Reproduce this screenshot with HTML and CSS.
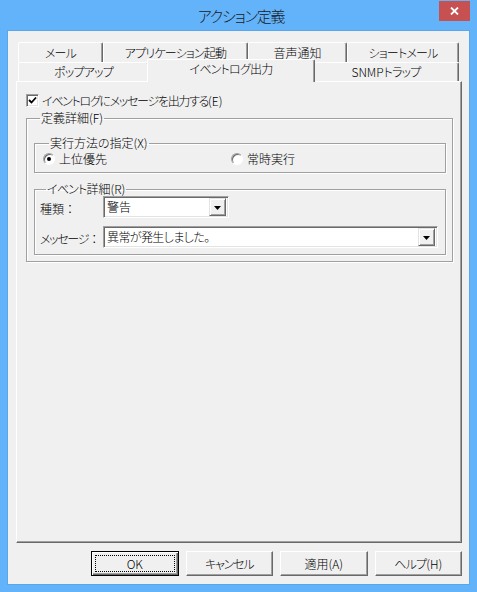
FILE: index.html
```html
<!DOCTYPE html>
<html lang="ja">
<head>
<meta charset="utf-8">
<title>アクション定義</title>
<link rel="stylesheet" href="styles.css">
</head>
<body>
<div class="window">
  <div class="titlebar">
    <div class="title">アクション定義</div>
    <div class="close"><svg width="9" height="8" viewBox="0 0 9 8"><path d="M1 0.5 L8 7.5 M8 0.5 L1 7.5" stroke="#fff" stroke-width="1.8" fill="none"/></svg></div>
  </div>
  <div class="client">
    <div class="tabrow back">
      <div class="tab w-mail">メール</div>
      <div class="tab w-app">アプリケーション起動</div>
      <div class="tab w-voice">音声通知</div>
      <div class="tab w-sms">ショートメール</div>
    </div>
    <div class="tabrow front">
      <div class="tab w-popup">ポップアップ</div>
      <div class="tab active w-event">イベントログ出力</div>
      <div class="tab w-snmp"><span class="lat">SNMP</span>トラップ</div>
    </div>
    <div class="panel">
      <div class="checkrow">
        <span class="checkbox"><svg width="9" height="9" viewBox="0 0 9 9"><path d="M1 4 L3.5 6.5 L8 1.5" stroke="#000" stroke-width="1.8" fill="none"/></svg></span>
        <span class="checklabel">イベントログにメッセージを出力する<span class="lat">(E)</span></span>
      </div>
      <fieldset class="group outer">
        <legend>定義詳細(F)</legend>
        <fieldset class="group inner mode">
          <legend>実行方法の指定(X)</legend>
          <div class="radios">
            <div class="radiorow"><span class="radio on"></span><span>上位優先</span></div>
            <div class="radiorow"><span class="radio"></span><span>常時実行</span></div>
          </div>
        </fieldset>
        <fieldset class="group inner detail">
          <legend><span class="kana">イベント</span>詳細(R)</legend>
          <div class="field">
            <span class="flabel">種類<span class="colon">：</span></span>
            <div class="combo short"><span class="ctext">警告</span><span class="dropbtn"><svg width="7" height="4" viewBox="0 0 7 4"><path d="M0 0 H7 L3.5 4 Z" fill="#000"/></svg></span></div>
          </div>
          <div class="field">
            <span class="flabel"><span class="kana2">メッセージ</span><span class="colon">：</span></span>
            <div class="combo long"><span class="ctext">異常が発生しました。</span><span class="dropbtn"><svg width="7" height="4" viewBox="0 0 7 4"><path d="M0 0 H7 L3.5 4 Z" fill="#000"/></svg></span></div>
          </div>
        </fieldset>
      </fieldset>
    </div>
    <div class="buttons">
      <div class="btn default"><span class="focus">OK</span></div>
      <div class="btn kana">キャンセル</div>
      <div class="btn">適用(A)</div>
      <div class="btn"><span class="kana">ヘルプ</span>(H)</div>
    </div>
  </div>
</div>
</body>
</html>
```
FILE: styles.css
```css
* { box-sizing: border-box; }
html, body { margin: 0; padding: 0; }
body {
  width: 477px;
  height: 592px;
  overflow: hidden;
  background: #63b3fb;
  font-family: "Noto Sans CJK JP", "Noto Sans", sans-serif;
  font-size: 12px;
  font-weight: 300;
  color: #000;
  font-feature-settings: "palt";
}
.window {
  height: 592px;
  display: flex;
  flex-direction: column;
  padding: 0 8px 8px 8px;
}
.titlebar {
  height: 31px;
  position: relative;
  flex: none;
}
.title {
  text-align: center;
  font-size: 15px;
  line-height: 20px;
  padding-top: 6px;
  padding-left: 5px;
  color: #1a1a1a;
  letter-spacing: -1.2px;
}
.close {
  position: absolute;
  right: -1px;
  top: 1px;
  width: 31px;
  height: 20px;
  background: #c75050;
  display: flex;
  align-items: center;
  justify-content: center;
}
.client {
  flex: 1;
  background: #f0f0f0;
  display: flex;
  flex-direction: column;
  padding: 11px 7px 0 8px;
  box-shadow: 0 0 0 1px #5aa6ec;
}
.tabrow {
  display: flex;
  margin-left: 2px;
  flex: none;
}
.tabrow.back { height: 20px; }
.tabrow.front { height: 19px; }
.tab {
  display: flex;
  align-items: center;
  justify-content: center;
  white-space: nowrap;
  line-height: 14px;
  letter-spacing: -0.8px;
  background: #f0f0f0;
  border-top: 1px solid #fff;
  border-left: 1px solid #fff;
  border-right: 1px solid #696969;
  box-shadow: inset -1px 0 0 #a0a0a0;
  border-top-left-radius: 2px;
  border-top-right-radius: 2px;
}
.w-mail { width: 85px; }
.w-app { width: 145px; }
.w-voice { width: 99px; letter-spacing: 0; }
.w-sms { width: 112px; }
.w-popup { width: 131px; }
.w-event { width: 168px; }
.w-snmp { width: 146px; }
.tab.active {
  height: 23px;
  margin: -3px -2px -1px -2px;
  position: relative;
  z-index: 1;
  padding-bottom: 4px;
}
.lat { letter-spacing: 0; }
.kana { letter-spacing: -0.8px; }
.kana2 { letter-spacing: -1.3px; }
.panel {
  width: 446px;
  height: 462px;
  flex: none;
  border-top: 1px solid #fff;
  border-left: 1px solid #fff;
  border-right: 1px solid #696969;
  border-bottom: 1px solid #696969;
  box-shadow: inset -1px -1px 0 #a0a0a0;
  padding: 11px 0 0 9px;
}
.checkrow {
  display: flex;
  align-items: center;
  height: 15px;
}
.checkbox {
  width: 13px;
  height: 13px;
  background: #fff;
  border: 1px solid;
  border-color: #a0a0a0 #fff #fff #a0a0a0;
  box-shadow: inset 1px 1px 0 #696969, inset -1px -1px 0 #e3e3e3;
  display: flex;
  align-items: center;
  justify-content: center;
  margin-right: 3px;
}
.checklabel { line-height: 14px; letter-spacing: -1.3px; }
.group {
  margin: 0;
  padding: 0;
  border: 1px solid #a0a0a0;
  box-shadow: inset 1px 1px 0 #fff, 1px 1px 0 #fff;
  min-width: 0;
}
.group legend {
  padding: 0 1px;
  margin-left: 6px;
  line-height: 14px;
}
.outer {
  width: 427px;
  margin-top: 3px;
  padding: 0 0 6px 7px;
}
.inner { width: 412px; }
.mode {
  margin-top: 11px;
  padding: 2px 0 6px 8px;
}
.radios {
  display: grid;
  grid-template-columns: 188px 1fr;
  height: 14px;
  align-items: center;
}
.radiorow {
  display: flex;
  align-items: center;
  gap: 4px;
  line-height: 14px;
}
.radio {
  width: 12px;
  height: 12px;
  border-radius: 50%;
  background: #fff;
  border: 1px solid;
  border-color: #a0a0a0 #fff #fff #a0a0a0;
  box-shadow: inset 1px 1px 0 #696969;
  display: flex;
  align-items: center;
  justify-content: center;
}
.radio.on::after {
  content: "";
  width: 4px;
  height: 4px;
  border-radius: 50%;
  background: #000;
}
.detail {
  margin-top: 9px;
  padding: 0 0 6px 5px;
}
.field {
  display: flex;
  align-items: center;
  height: 22px;
}
.field + .field { margin-top: 8px; }
.flabel {
  width: 63px;
  line-height: 14px;
  padding-top: 3px;
  white-space: nowrap;
}
.colon {
  font-feature-settings: normal;
}
.combo {
  height: 22px;
  background: #fff;
  border: 1px solid;
  border-color: #a0a0a0 #fff #fff #a0a0a0;
  box-shadow: inset 1px 1px 0 #696969, inset -1px -1px 0 #e3e3e3;
  display: flex;
  align-items: center;
  padding: 2px 2px 2px 3px;
}
.combo.short { width: 126px; }
.combo.long { width: 335px; }
.ctext {
  flex: 1;
  line-height: 14px;
  font-size: 12px;
}
.combo.long .ctext { letter-spacing: -0.6px; }
.dropbtn {
  width: 17px;
  height: 18px;
  background: #f0f0f0;
  border: 1px solid;
  border-color: #e3e3e3 #696969 #696969 #e3e3e3;
  box-shadow: inset 1px 1px 0 #fff, inset -1px -1px 0 #a0a0a0;
  display: flex;
  align-items: center;
  justify-content: center;
  padding-top: 1px;
}
.buttons {
  display: flex;
  gap: 7px;
  margin-top: 8px;
  padding-left: 75px;
}
.btn {
  width: 88px;
  height: 25px;
  background: #f0f0f0;
  border: 1px solid;
  border-color: #fff #696969 #696969 #fff;
  box-shadow: inset -1px -1px 0 #a0a0a0;
  display: flex;
  align-items: center;
  justify-content: center;
  line-height: 14px;
}
.btn.kana { letter-spacing: -1.2px; }
.btn.default {
  border: 1px solid #000;
  box-shadow: inset 1px 1px 0 #fff, inset -1px -1px 0 #696969, inset -2px -2px 0 #a0a0a0;
  padding: 3px;
}
.focus {
  width: 100%;
  height: 100%;
  border: 1px dotted #000;
  display: flex;
  align-items: center;
  justify-content: center;
}
```
